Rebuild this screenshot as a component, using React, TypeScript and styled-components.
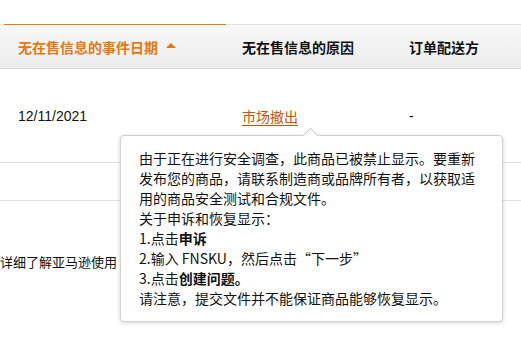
import React from 'react';
import styled, { createGlobalStyle } from 'styled-components';

const GlobalStyle = createGlobalStyle`
  body {
    margin: 0;
    background: #fff;
    font-family: "Liberation Sans", "Noto Sans CJK SC", sans-serif;
    color: #111;
  }
`;

const tipLines: React.ReactNode[] = [
  '由于正在进行安全调查，此商品已被禁止显示。要重新',
  '发布您的商品，请联系制造商或品牌所有者，以获取适',
  '用的商品安全测试和合规文件。',
  '关于申诉和恢复显示：',
  <>1.点击<b>申诉</b></>,
  '2.输入 FNSKU，然后点击“下一步”',
  <>3.点击<b>创建问题。</b></>,
  '请注意，提交文件并不能保证商品能够恢复显示。',
];

function App() {
  return (
    <>
      <GlobalStyle />
      <Page>
        <Table>
          <HeadCell $sorted>
            无在售信息的事件日期 <Caret />
          </HeadCell>
          <HeadCell>无在售信息的原因</HeadCell>
          <HeadCell>订单配送方</HeadCell>

          <BodyCell $height={94}>12/11/2021</BodyCell>
          <BodyCell $height={94}>
            <ReasonLink href="#">市场撤出</ReasonLink>
          </BodyCell>
          <BodyCell $height={94}>-</BodyCell>

          <BodyCell $height={38}></BodyCell>
          <BodyCell $height={38}></BodyCell>
          <BodyCell $height={38}></BodyCell>
        </Table>
        <FooterText>详细了解亚马逊使用</FooterText>

        <Tooltip lang="zh-CN">
          <Arrow />
          {tipLines.map((line, i) => (
            <TipLine key={i}>{line}</TipLine>
          ))}
        </Tooltip>
      </Page>
    </>
  );
}

export default App;

const Page = styled.div`
  position: relative;
  width: 521px;
  height: 340px;
  overflow: hidden;
  padding-top: 24px;
  box-sizing: border-box;
`;

const Table = styled.div`
  display: grid;
  grid-template-columns: 226px 167px 160px;
  width: 553px;
`;

const HeadCell = styled.div<{ $sorted?: boolean }>`
  position: relative;
  display: flex;
  align-items: center;
  gap: 8px;
  height: 45px;
  box-sizing: border-box;
  padding-left: ${p => (p.$sorted ? 18 : 16)}px;
  border-top: 1px solid #e3e3e3;
  border-bottom: 1px solid #dcdcdc;
  background: linear-gradient(#f8f8f8, #ececec);
  font-size: 14px;
  font-weight: bold;
  color: ${p => (p.$sorted ? '#e47911' : '#111')};
  white-space: nowrap;
  ${p =>
    p.$sorted &&
    `
    &::before {
      content: '';
      position: absolute;
      left: 4px;
      right: 0;
      top: -1px;
      height: 1px;
      background: #e47911;
    }
  `}
`;

const Caret = styled.span`
  width: 0;
  height: 0;
  border-left: 5px solid transparent;
  border-right: 5px solid transparent;
  border-bottom: 5px solid #e47911;
  margin-top: -2px;
`;

const BodyCell = styled.div<{ $height: number }>`
  display: flex;
  align-items: center;
  height: ${p => p.$height}px;
  box-sizing: border-box;
  padding-left: 16px;
  &:nth-child(3n + 1) {
    padding-left: 18px;
  }
  border-bottom: 1px solid #e0e0e0;
  font-size: 14px;
  color: #111;
`;

const ReasonLink = styled.a`
  color: #c45500;
  text-decoration: underline;
  text-underline-offset: 3px;
`;

const FooterText = styled.div`
  margin-top: 52px;
  font-size: 13px;
  line-height: 20px;
  color: #111;
  white-space: nowrap;
`;

const Tooltip = styled.div`
  position: absolute;
  left: 120px;
  top: 135px;
  width: 383px;
  box-sizing: border-box;
  padding: 12px 20px 13px 18px;
  background: #fff;
  border: 1px solid #d0d0d0;
  border-radius: 4px;
  box-shadow: 0 1px 4px rgba(0, 0, 0, 0.18);
  font-family: "Noto Sans CJK SC", "Liberation Sans", sans-serif;
  font-size: 14px;
  line-height: 20px;
  color: #111;
  b {
    font-weight: bold;
  }
`;

const TipLine = styled.div`
  white-space: nowrap;
`;

const Arrow = styled.span`
  position: absolute;
  top: -6px;
  left: 184px;
  width: 10px;
  height: 10px;
  background: #fff;
  border-top: 1px solid #d0d0d0;
  border-left: 1px solid #d0d0d0;
  transform: rotate(45deg);
`;
